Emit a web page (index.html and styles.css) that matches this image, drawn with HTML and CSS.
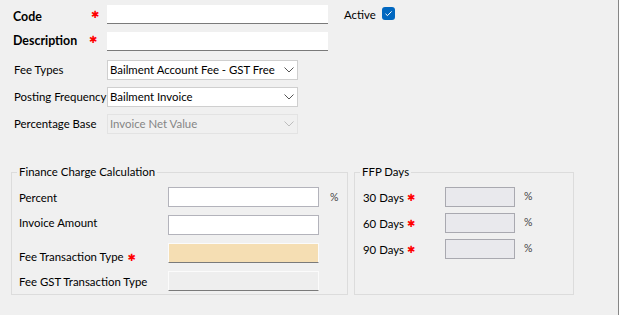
FILE: index.html
```html
<!DOCTYPE html>
<html>
<head>
<meta charset="utf-8">
<link rel="stylesheet" href="styles.css">
</head>
<body>
<div class="window">
  <div class="top">
    <div class="row row-text">
      <span class="lbl bold lbl-code">Code</span><span class="req">✱</span>
      <div class="tb"></div>
      <span class="active">Active</span>
      <span class="check"><svg width="13" height="13" viewBox="0 0 13 13"><path d="M3.5 6.8 L5.5 8.6 L9.6 4.4" fill="none" stroke="#fff" stroke-width="1"/></svg></span>
    </div>
    <div class="row row-text">
      <span class="lbl bold lbl-desc">Description</span><span class="req req-d">✱</span>
      <div class="tb"></div>
    </div>
    <div class="row row-sel first-sel">
      <span class="lbl">Fee Types</span>
      <div class="sel"><span>Bailment Account Fee - GST Free</span><svg class="arrow" width="10" height="6" viewBox="0 0 10 6"><path d="M0.5 0.5 L5 5 L9.5 0.5" fill="none" stroke="#555" stroke-width="1"/></svg></div>
    </div>
    <div class="row row-sel">
      <span class="lbl">Posting Frequency</span>
      <div class="sel"><span>Bailment Invoice</span><svg class="arrow" width="10" height="6" viewBox="0 0 10 6"><path d="M0.5 0.5 L5 5 L9.5 0.5" fill="none" stroke="#555" stroke-width="1"/></svg></div>
    </div>
    <div class="row row-sel">
      <span class="lbl">Percentage Base</span>
      <div class="sel disabled"><span>Invoice Net Value</span><svg class="arrow" width="10" height="6" viewBox="0 0 10 6"><path d="M0.5 0.5 L5 5 L9.5 0.5" fill="none" stroke="#bdbdbd" stroke-width="1"/></svg></div>
    </div>
  </div>
  <div class="groups">
    <fieldset class="group fin">
      <legend>Finance Charge Calculation</legend>
      <div class="frow">
        <span class="flbl">Percent</span>
        <div class="fbox white"></div>
        <span class="pct">%</span>
      </div>
      <div class="frow">
        <span class="flbl flbl-up">Invoice Amount</span>
        <div class="fbox white"></div>
      </div>
      <div class="frow">
        <span class="flbl flbl-down">Fee Transaction Type <span class="req2">✱</span></span>
        <div class="fbox wheat"></div>
      </div>
      <div class="frow">
        <span class="flbl">Fee GST Transaction Type</span>
        <div class="fbox grey"></div>
      </div>
    </fieldset>
    <fieldset class="group ffp">
      <legend>FFP Days</legend>
      <div class="drow">
        <span class="dlbl">30 Days</span><span class="req3">✱</span>
        <div class="dbox"></div>
        <span class="pct2">%</span>
      </div>
      <div class="drow">
        <span class="dlbl">60 Days</span><span class="req3">✱</span>
        <div class="dbox"></div>
        <span class="pct2">%</span>
      </div>
      <div class="drow">
        <span class="dlbl">90 Days</span><span class="req3">✱</span>
        <div class="dbox"></div>
        <span class="pct2">%</span>
      </div>
    </fieldset>
  </div>
</div>
</body>
</html>
```

FILE: styles.css
```css
html, body {
  margin: 0;
  padding: 0;
  background: #f0f0f0;
}
body {
  font-family: Lato, "Liberation Sans", sans-serif;
  font-size: 11.4px;
  color: #000;
}
.window {
  width: 618px;
  height: 315px;
  border-right: 1px solid #868686;
  background: #f0f0f0;
  overflow: hidden;
}
.top {
  padding: 5px 0 0 13px;
  display: flex;
  flex-direction: column;
}
.row {
  display: flex;
  align-items: center;
  height: 19px;
}
.row-text + .row-text {
  margin-top: 8px;
}
.first-sel {
  margin-top: 9px;
}
.row-sel + .row-sel {
  margin-top: 8px;
}
.lbl {
  width: 94px;
  white-space: nowrap;
}
.row-sel .lbl {
  padding-left: 1px;
  width: 93px;
}
.row-text .lbl {
  width: 78px;
  font-size: 12.4px;
}
.lbl-code {
  padding-top: 3px;
}
.lbl-desc {
  padding-bottom: 2px;
}
.bold {
  font-weight: 700;
}
.req {
  width: 16px;
  color: #f00;
  font-family: "DejaVu Sans", sans-serif;
  font-size: 10px;
  line-height: 10px;
  font-weight: 700;
}
.req-d {
  margin-left: -2px;
  width: 18px;
  margin-bottom: 4px;
}
.tb {
  width: 221px;
  height: 18px;
  background: #fff;
  border-bottom: 1px solid #7a7a7a;
}
.active {
  margin-left: 16px;
  width: 38px;
}
.check {
  width: 13px;
  height: 13px;
  border-radius: 3px;
  background: #0067c0;
  display: flex;
  margin-top: -3px;
}
.sel {
  width: 187px;
  height: 18px;
  background: #fff;
  border: 1px solid #cfcfcf;
  display: flex;
  align-items: center;
  justify-content: space-between;
  padding-left: 2px;
  box-sizing: content-box;
}
.sel span {
  white-space: nowrap;
}
.sel .arrow {
  margin-right: 3px;
}
.sel.disabled {
  background: #f0f0f0;
  border-color: #e3e3e3;
  color: #858585;
}
.groups {
  display: flex;
  gap: 6px;
  padding-left: 11px;
  margin-top: 32px;
}
.group {
  margin: 0;
  padding: 0 0 0 5px;
  border: 1px solid #dcdcdc;
  height: 128px;
  min-width: 0;
}
.group legend {
  padding: 0 2px;
  line-height: 14px;
}
.fin {
  width: 330px;
}
.ffp {
  width: 213px;
}
.frow {
  display: flex;
  align-items: center;
  height: 20px;
  padding-left: 2px;
  margin-top: 8px;
}
.flbl {
  width: 149px;
  white-space: nowrap;
}
.flbl-up {
  padding-bottom: 5px;
}
.flbl-down {
  padding-top: 7px;
}
.req2 {
  color: #f00;
  font-family: "DejaVu Sans", sans-serif;
  font-size: 10px;
  font-weight: 700;
  margin-left: 1px;
}
.fbox {
  width: 149px;
  height: 18px;
}
.white {
  background: #fff;
  border: 1px solid #b3b3bb;
}
.wheat {
  background: #f5deb3;
  border: 1px solid #fbfbfb;
  border-bottom-color: #7a7a7a;
}
.grey {
  background: #eeeeee;
  border: 1px solid #fbfbfb;
  border-bottom-color: #7a7a7a;
}
.pct {
  margin-left: 11px;
  color: #444;
  font-size: 10.5px;
}
.drow {
  display: flex;
  align-items: center;
  height: 20px;
  padding-left: 3px;
  margin-top: 6px;
}
.drow:first-of-type {
  margin-top: 8px;
}
.dlbl {
  width: 44px;
  white-space: nowrap;
}
.req3 {
  width: 38px;
  color: #f00;
  font-family: "DejaVu Sans", sans-serif;
  font-size: 10px;
  font-weight: 700;
}
.dbox {
  width: 68px;
  height: 18px;
  background: #e9e9ed;
  border: 1px solid #a9a9b0;
}
.pct2 {
  margin-left: 9px;
  color: #444;
  font-size: 10.5px;
  margin-top: -2px;
}
```
